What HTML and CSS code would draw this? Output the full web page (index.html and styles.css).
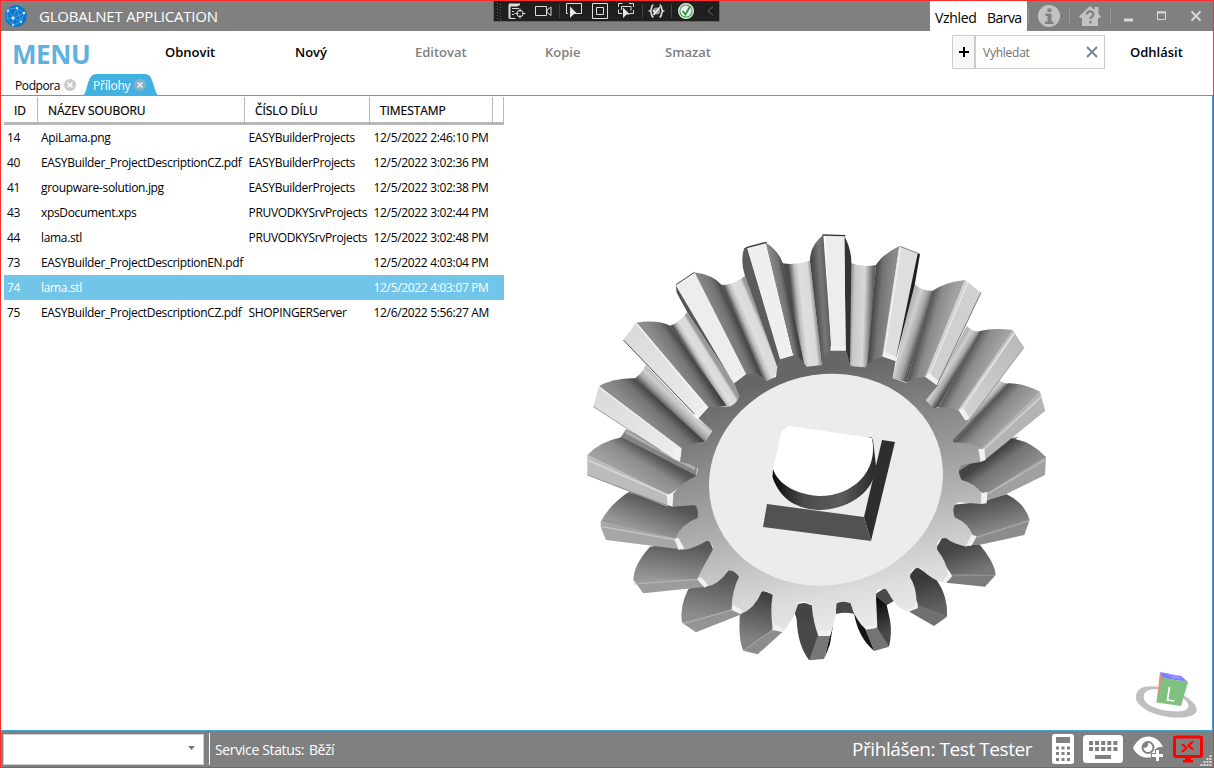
FILE: index.html
```html
<!DOCTYPE html>
<html lang="cs">
<head>
<meta charset="utf-8">
<title>GLOBALNET APPLICATION</title>
<link rel="stylesheet" href="styles.css">
</head>
<body>
<div class="window">
  <header class="titlebar">
    <svg class="globe" width="24" height="24" viewBox="0 0 24 24"><circle cx="12" cy="12" r="10.8" fill="#0878ce"/><path d="M4 5l9-1 7 5-3 9-8 3-6-7zM4 5l5 9 11-5M9 14l8 4M13 4l-4 10-6 0M13 4l4 14M9 14l0 7" fill="none" stroke="#75b9ed" stroke-width=".6"/><g fill="#e6f5ff"><circle cx="13" cy="4" r="1.1"/><circle cx="9" cy="14" r="1.5"/><circle cx="20" cy="9" r="1.2"/><circle cx="17" cy="18" r="1"/><circle cx="4" cy="7" r="1"/><circle cx="9" cy="21" r=".9"/></g></svg>
    <span class="app-name">GLOBALNET APPLICATION</span>
    <div class="title-tools">
      <div class="theme"><span class="t-look">Vzhled</span><span class="t-color">Barva</span></div>
      <svg width="184" height="30" viewBox="1027 1 184 30"><path d="M1028.500 9v14M1069.500 9v14M1110.500 9v14" stroke="#999"/><circle cx="1049" cy="16" r="11" fill="#c2c2c2"/><path d="M1047.500 8.500h4v3.500h-4zM1045.500 13.500h6v8h2v2.500h-8.500v-2.500h2.500v-5.500h-2z" fill="#808080"/><path d="M1079 16.500l11-10.500 4.500 4V7h4v7l2.500 2.500-1.500 1.500h-1.500v8h-16v-8h-1.500z" fill="#c2c2c2"/><path d="M1087 14.500c0-4 6.500-4 6.500-.5 0 2.500-3 2.500-3 5M1090.500 21v2.500" fill="none" stroke="#808080" stroke-width="2.200"/><path d="M1124 18.500h9v3h-9z" fill="#d8d8d8"/><path d="M1157.500 12.500h8v7h-8zM1157 12h9" fill="none" stroke="#d8d8d8"/><path d="M1157 11.500h9v2h-9z" fill="#d8d8d8"/><path d="M1191.500 11.500l9 9M1200.500 11.500l-9 9" stroke="#d8d8d8" stroke-width="2"/></svg>
    </div>
    <svg class="debugbar" width="227" height="22" viewBox="493 0 227 22"><path d="M493 0h227v22h-227z" fill="#666"/><path d="M494 1h225v20h-225z" fill="#1f1f1f"/><path d="M497.500 3v16M500.500 4v16" stroke="#666" stroke-dasharray="1 2"/><path d="M518 5.500h-8.500v13M509 4.500h11" fill="none" stroke="#ddd" stroke-width="2"/><path d="M509.500 18.500h6M512 8.500h7M512 11.500h2M512 14.500h2" stroke="#ddd"/><circle cx="520" cy="13.500" r="3.200" fill="none" stroke="#ddd"/><path d="M520 8.500v3.500M520 15v3.500M514.500 13.500h4M522 13.500h3.500" stroke="#ddd"/><path d="M535.500 6.500h11v9h-11zM547 10l4-3v8.500l-4-3z" fill="none" stroke="#ddd"/><path d="M559.500 4v14M642.500 4v14M671.500 4v14" stroke="#444"/><path d="M568 13.500h-1.500v-10h15v10h-6" fill="none" stroke="#ddd"/><path d="M570 6.500l7.500 7.500h-3.500l-4 4z" fill="#e5e5e5"/><path d="M592.500 3.500h15v15h-15zM596.500 7.500h7v7h-7z" fill="none" stroke="#ddd"/><path d="M618.500 7v-3.500h4M629 3.500h4.500v3.500M633.500 10v3.500h-4M622 13.500h-3.500v-4M621.500 10v-3.500h9.500v4" fill="none" stroke="#ddd"/><path d="M623 7.500l7 7h-3.500l-3.500 3.500z" fill="#e5e5e5"/><path d="M653.500 5c-3 0-1 5-3.500 6 2.500 1 .5 6 3.500 6M659.500 5c3 0 1 5 3.500 6-2.500 1-.5 6-3.500 6" fill="none" stroke="#ddd" stroke-width="1.700"/><circle cx="656.500" cy="11" r="3.600" fill="#999"/><path d="M653.500 15l6.500-8M653 10l3 3.500" stroke="#eee" stroke-width="1.600"/><circle cx="686" cy="11" r="7.300" fill="#2d9b40" stroke="#e8e8e8" stroke-width="1.400"/><circle cx="686" cy="11" r="5.600" fill="#eee"/><path d="M682.500 11l3 3.500 4.500-8" fill="none" stroke="#25943a" stroke-width="1.800"/><path d="M713 6.500l-5 4.500 5 4.500" fill="none" stroke="#666"/></svg>
  </header>

  <nav class="menu">
    <div class="menu-title">MENU</div>
    <div class="commands">
      <b class="c1">Obnovit</b><b class="c2">Nový</b><b class="c3 off">Editovat</b><b class="c4 off">Kopie</b><b class="c5 off">Smazat</b>
    </div>
    <div class="search">
      <span class="plus"><svg width="10" height="10"><path d="M0 5h10M5 0v10" stroke="#000" stroke-width="2"/></svg></span>
      <span class="query">Vyhledat</span>
      <svg class="clear" width="12" height="12"><path d="M1 1l10 10M11 1L1 11" stroke="#7d8790" stroke-width="2"/></svg>
    </div>
    <b class="logout">Odhlásit</b>
  </nav>

  <div class="tabs">
    <div class="tab"><span class="tab-a">Podpora</span><svg class="x" width="12" height="12"><circle cx="6" cy="6" r="6" fill="#c9c9c9"/><path d="M3.500 3.500l5 5M8.500 3.500l-5 5" stroke="#fff" stroke-width="1.500"/></svg></div>
    <div class="tab active">
      <svg class="tab-shape" width="77" height="22" viewBox="82 74 77 22"><path d="M82 96c4-2 4-7 6-13 2-6 4-9 9-9h47c6 0 7 3 9 9 2 6 3 11 6 13z" fill="#41b1e1"/></svg>
      <span class="tab-b">Přílohy</span><svg class="x" width="12" height="12"><circle cx="6" cy="6" r="6" fill="#8bb0c2"/><path d="M3.500 3.500l5 5M8.500 3.500l-5 5" stroke="#e4f4fb" stroke-width="1.500"/></svg>
    </div>
  </div>

  <main class="pane">
    <div class="grid">
      <div class="row head"><span>ID</span><span>NÁZEV SOUBORU</span><span>ČÍSLO DÍLU</span><span>TIMESTAMP</span><span></span></div>
      <div class="row"><span>14</span><span>ApiLama.png</span><span>EASYBuilderProjects</span><span>12/5/2022 2:46:10 PM</span></div>
      <div class="row"><span>40</span><span>EASYBuilder_ProjectDescriptionCZ.pdf</span><span>EASYBuilderProjects</span><span>12/5/2022 3:02:36 PM</span></div>
      <div class="row"><span>41</span><span>groupware-solution.jpg</span><span>EASYBuilderProjects</span><span>12/5/2022 3:02:38 PM</span></div>
      <div class="row"><span>43</span><span>xpsDocument.xps</span><span>PRUVODKYSrvProjects</span><span>12/5/2022 3:02:44 PM</span></div>
      <div class="row"><span>44</span><span>lama.stl</span><span>PRUVODKYSrvProjects</span><span>12/5/2022 3:02:48 PM</span></div>
      <div class="row"><span>73</span><span>EASYBuilder_ProjectDescriptionEN.pdf</span><span></span><span>12/5/2022 4:03:04 PM</span></div>
      <div class="row selected"><span>74</span><span>lama.stl</span><span></span><span>12/5/2022 4:03:07 PM</span></div>
      <div class="row"><span>75</span><span>EASYBuilder_ProjectDescriptionCZ.pdf</span><span>SHOPINGERServer</span><span>12/6/2022 5:56:27 AM</span></div>
    </div>

    <svg class="viewer" width="708" height="634" viewBox="504 96 708 634">
      <defs>
        <linearGradient id="f"><stop offset="0" stop-color="#8c8c8c"/><stop offset=".6" stop-color="#747474"/><stop offset="1" stop-color="#444"/></linearGradient>
        <linearGradient id="g"><stop offset="0" stop-color="#a2a2a2"/><stop offset=".6" stop-color="#8a8a8a"/><stop offset="1" stop-color="#545454"/></linearGradient>
        <linearGradient id="v"><stop offset="0" stop-color="#4c4c4c"/><stop offset=".25" stop-color="#bdbdbd"/><stop offset=".45" stop-color="#dedede"/><stop offset=".85" stop-color="#dadada"/><stop offset="1" stop-color="#999"/></linearGradient>
        <linearGradient id="w"><stop offset="0" stop-color="#555"/><stop offset=".35" stop-color="#a6a6a6"/><stop offset=".75" stop-color="#d0d0d0"/><stop offset="1" stop-color="#b8b8b8"/></linearGradient>
        <linearGradient id="f1" href="#f" gradientUnits="userSpaceOnUse" x1="180" y1="560" x2="231" y2="506"/>
        <linearGradient id="f2" href="#f" gradientUnits="userSpaceOnUse" x1="276" y1="405" x2="327" y2="371"/>
        <linearGradient id="f3" href="#f" gradientUnits="userSpaceOnUse" x1="410" y1="284" x2="467" y2="259"/>
        <linearGradient id="f4" href="#f" gradientUnits="userSpaceOnUse" x1="590" y1="207" x2="628" y2="200"/>
        <linearGradient id="f5" gradientUnits="userSpaceOnUse" x1="10" y1="200" x2="54" y2="197"><stop offset="0" stop-color="#444"/><stop offset=".6" stop-color="#777"/><stop offset="1" stop-color="#606060"/></linearGradient>
        <linearGradient id="f6" href="#f" gradientUnits="userSpaceOnUse" x1="245" y1="214" x2="189" y2="209"/>
        <linearGradient id="f7" href="#g" gradientUnits="userSpaceOnUse" x1="407" y1="295" x2="342" y2="277"/>
        <linearGradient id="f8" href="#g" gradientUnits="userSpaceOnUse" x1="528" y1="418" x2="466" y2="384"/>
        <linearGradient id="f9" href="#g" gradientUnits="userSpaceOnUse" x1="605" y1="572" x2="545" y2="516"/>
        <linearGradient id="f10" href="#f" gradientUnits="userSpaceOnUse" x1="618" y1="105" x2="567" y2="34"/>
        <linearGradient id="f11" gradientUnits="userSpaceOnUse" x1="580" y1="262" x2="555" y2="175"><stop offset="0" stop-color="#868686"/><stop offset="1" stop-color="#505050"/></linearGradient>
        <linearGradient id="f12" gradientUnits="userSpaceOnUse" x1="480" y1="405" x2="450" y2="320"><stop offset="0" stop-color="#777"/><stop offset="1" stop-color="#454545"/></linearGradient>
        <linearGradient id="f13" gradientUnits="userSpaceOnUse" x1="380" y1="510" x2="350" y2="410"><stop offset="0" stop-color="#626262"/><stop offset="1" stop-color="#383838"/></linearGradient>
        <linearGradient id="f14" gradientUnits="userSpaceOnUse" x1="240" y1="570" x2="200" y2="480"><stop offset="0" stop-color="#484848"/><stop offset="1" stop-color="#080808"/></linearGradient>
        <linearGradient id="f16" gradientUnits="userSpaceOnUse" x1="530" y1="600" x2="560" y2="470"><stop offset="0" stop-color="#828282"/><stop offset="1" stop-color="#404040"/></linearGradient>
        <linearGradient id="f17" gradientUnits="userSpaceOnUse" x1="380" y1="530" x2="400" y2="410"><stop offset="0" stop-color="#8c8c8c"/><stop offset="1" stop-color="#565656"/></linearGradient>
        <linearGradient id="f18" gradientUnits="userSpaceOnUse" x1="260" y1="420" x2="275" y2="310"><stop offset="0" stop-color="#969696"/><stop offset="1" stop-color="#585858"/></linearGradient>
        <linearGradient id="f19" gradientUnits="userSpaceOnUse" x1="180" y1="270" x2="215" y2="175"><stop offset="0" stop-color="#989898"/><stop offset="1" stop-color="#555"/></linearGradient>
        <linearGradient id="f20" href="#g" gradientUnits="userSpaceOnUse" x1="140" y1="105" x2="190" y2="25"/>
        <linearGradient id="v1" href="#w" gradientUnits="userSpaceOnUse" x1="260" y1="535" x2="293" y2="501"/>
        <linearGradient id="v2" href="#v" gradientUnits="userSpaceOnUse" x1="350" y1="406" x2="395" y2="378"/>
        <linearGradient id="v3" href="#v" gradientUnits="userSpaceOnUse" x1="486" y1="302" x2="545" y2="277"/>
        <linearGradient id="v4" href="#v" gradientUnits="userSpaceOnUse" x1="640" y1="250" x2="706" y2="243"/>
        <linearGradient id="v5" gradientUnits="userSpaceOnUse" x1="122" y1="250" x2="187" y2="252"><stop offset="0" stop-color="#999"/><stop offset=".15" stop-color="#c8c8c8"/><stop offset=".6" stop-color="#d8d8d8"/><stop offset="1" stop-color="#606060"/></linearGradient>
        <linearGradient id="v6" href="#w" gradientUnits="userSpaceOnUse" x1="330" y1="318" x2="280" y2="302"/>
        <linearGradient id="v7" href="#w" gradientUnits="userSpaceOnUse" x1="447" y1="416" x2="415" y2="396"/>
        <linearGradient id="v8" href="#w" gradientUnits="userSpaceOnUse" x1="513" y1="549" x2="492" y2="529"/>
        <linearGradient id="l1" x1="0" y1="0" x2="1" y2="1"><stop offset="0" stop-color="#d8d8d8"/><stop offset="1" stop-color="#eee"/></linearGradient>
        <linearGradient id="l2" x1="1" y1="0" x2="0" y2="1"><stop offset="0" stop-color="#b8b8b8"/><stop offset="1" stop-color="#d4d4d4"/></linearGradient>
        <linearGradient id="collar" gradientUnits="userSpaceOnUse" x1="630" y1="440" x2="800" y2="1200"><stop offset="0" stop-color="#666"/><stop offset=".25" stop-color="#868686"/><stop offset=".55" stop-color="#b0b0b0"/><stop offset=".85" stop-color="#dcdcdc"/><stop offset="1" stop-color="#eaeaea"/></linearGradient>
        <linearGradient id="bore" gradientUnits="userSpaceOnUse" x1="772" y1="0" x2="877" y2="0"><stop offset="0" stop-color="#080808"/><stop offset=".3" stop-color="#4b4b4b"/><stop offset=".65" stop-color="#5c5c5c"/><stop offset="1" stop-color="#282828"/></linearGradient>
      </defs>

      <g transform="translate(580 230) scale(.33333)">
        <!-- lower left teeth -->
        <g transform="translate(0 630)">
          <path d="M650 535Q652 615 687 660L714 657 730 560 700 495 650 495Z" fill="#484848"/>
          <path d="M644 520L645 497Q675 480 697 500L690 540 655 550Z" fill="#444"/>
          <path d="M480 520Q474 600 490 632L585 570 582 465 545 450Z" fill="url(#f16)"/><path d="M490 632L533 643 608 575 580 567Z" fill="#8c8c8c"/><path d="M490 632L580 568" stroke="#aaa" stroke-width="3"/>
          <path d="M325 447Q298 500 306 548L462 510 482 410 450 385Z" fill="url(#f17)"/><path d="M306 548L348 577 485 523 458 507Z" fill="#949494"/><path d="M308 552L458 509" stroke="#b4b4b4" stroke-width="3"/>
          <path d="M210 320Q160 375 160 420L359 419 404 340 387 296Z" fill="url(#f18)"/><path d="M160 420L190 460 380 440 355 416Z" fill="#9c9c9c"/><path d="M163 432L358 418" stroke="#b8b8b8" stroke-width="3"/>
          <path d="M145 155L140 165 260 210 350 240 355 195 230 170Z" fill="#777"/>
          <path d="M140 160Q85 200 62 245L290 299 357 235 352 193Z" fill="url(#f19)"/><path d="M62 245L62 260 78 300 300 328 288 295Z" fill="#a6a6a6"/><path d="M64 260L290 300" stroke="#c4c4c4" stroke-width="4"/>
          <path d="M120-5L138-32 300 50 352 76 348 112Z" fill="#858585"/><path d="M137-25L345 86" stroke="#adadad" stroke-width="10"/>
          <path d="M125-8Q60 5 22 45L265 165 352 108Z" fill="url(#f20)"/><path d="M22 45L22 105 263 200 262 163Z" fill="#bcbcbc"/><path d="M22 60L262 165" stroke="#d8d8d8" stroke-width="5"/><path d="M22 105L263 197" stroke="#777" stroke-width="2"/>
        </g>
        <!-- upper left teeth -->
        <path d="M165 445Q190 425 197 405L345 562 397 600 375 635 355 625Z" fill="url(#v1)"/>
        <path d="M57 468Q105 443 165 445L375 635 305 658Z" fill="url(#f1)"/><path d="M57 468L40 530 280 685 305 656Z" fill="url(#l1)"/><path d="M57 472L303 656" stroke="#eee" stroke-width="4"/><path d="M40 530L240 660" stroke="#777" stroke-width="2"/>
        <path d="M270 287Q295 280 322 247L462 460 478 500Q470 530 440 530Z" fill="url(#v2)"/>
        <path d="M168 278Q230 268 270 287L440 527 385 532Z" fill="url(#f2)"/><path d="M168 278L130 330 345 560 383 532Z" fill="url(#l1)"/><path d="M170 281L380 532" stroke="#f2f2f2" stroke-width="5"/><path d="M130 330L343 552" stroke="#555" stroke-width="3"/>
        <path d="M425 165Q460 165 495 138L592 412Q592 450 555 453L543 440Z" fill="url(#v3)"/>
        <path d="M287 165L290 188 322 247 462 460 456 445Z" fill="#555"/>
        <path d="M343 127Q400 135 425 165L548 442 498 432Z" fill="url(#f3)"/><path d="M343 127L287 165 458 455 496 432Z" fill="#ededed"/><path d="M288 164L343 127" stroke="#444" stroke-width="3"/>
        <path d="M608 100Q650 106 690 92L725 405 680 411 668 398Z" fill="url(#v4)"/>
        <path d="M502 55L490 62Q482 100 495 138L592 412 602 388Z" fill="#5c5c5c"/>
        <path d="M557 38Q595 62 608 100L673 405 640 378Z" fill="#666"/><path d="M557 38Q595 62 608 100L673 405 640 378Z" fill="url(#f4)"/><path d="M502 55L557 38 638 378 600 388Z" fill="#efefef"/><path d="M492 58L502 52 560 37" fill="none" stroke="#333" stroke-width="4"/>
        <!-- upper right teeth -->
        <g transform="translate(690 0)">
          <path d="M120 98Q160 114 198 105L175 405 165 412 120 408Z" fill="url(#v5)"/>
          <path d="M0 92Q0 45 40 15L65 360 35 402Z" fill="url(#f5)"/><path d="M103 17Q125 60 124 100L120 408 107 360Z" fill="#333"/><path d="M45 17L103 17 107 360 64 360Z" fill="#ededed"/><path d="M37 15L106 17" stroke="#333" stroke-width="4"/>
          <path d="M312 160Q335 185 370 182L290 457 248 445Z" fill="url(#v6)"/>
          <path d="M198 105Q215 75 268 48L220 380 172 407Z" fill="url(#f6)"/><path d="M268 48L325 71 257 390 217 380Z" fill="#dedede"/><path d="M272 50L222 378" stroke="#eee" stroke-width="5"/><path d="M270 49L329 72" stroke="#444" stroke-width="2"/><path d="M323 71L330 73 314 165 256 393Z" fill="#202020"/>
          <path d="M470 287Q490 308 512 303L387 530 370 536 345 510 383 460Z" fill="url(#v7)"/>
          <path d="M368 182Q405 157 465 150L347 440 290 457Z" fill="url(#f7)"/><path d="M465 150L513 188 382 465 347 437Z" fill="#d0d0d0"/><path d="M473 157L358 434" stroke="#e8e8e8" stroke-width="4"/><path d="M513 188L382 462" stroke="#666" stroke-width="2.500"/>
          <path d="M568 450Q580 462 600 460L430 638 420 625 478 565Z" fill="url(#v8)"/>
          <path d="M510 303Q550 292 608 300L448 540 385 535Z" fill="url(#f8)"/><path d="M608 300L642 352 478 570 447 538Z" fill="url(#l2)"/><path d="M612 310L455 540" stroke="#e4e4e4" stroke-width="5"/><path d="M642 352L478 570" stroke="#777" stroke-width="2"/>
        </g>
        <!-- lower right teeth -->
        <g transform="translate(690 630)">
          <path d="M625-10L598-5 527 55 450 72 440 115 475 125Z" fill="#888"/><path d="M600-3L527 45" stroke="#aaa" stroke-width="8"/>
          <path d="M600-5Q660 0 707 50L530 165 443 120 443 95Z" fill="url(#f10)"/><path d="M708 48L705 105 528 192 530 160Z" fill="#a0a0a0"/><path d="M708 58L532 162" stroke="#bbb" stroke-width="4"/>
          <path d="M590 163Q645 190 659 240L496 293 426 235 428 194 520 185Z" fill="url(#f11)"/><path d="M659 240L643 285 483 320 500 288Z" fill="#8c8c8c"/><path d="M657 242L500 292" stroke="#a8a8a8" stroke-width="4"/>
          <path d="M510 315Q555 370 557 405L425 405 375 330 400 287 470 315Z" fill="url(#f12)"/><path d="M557 405L525 440 408 428 428 402Z" fill="#7c7c7c"/><path d="M555 406L428 405" stroke="#999" stroke-width="3"/>
          <path d="M380 420Q415 470 411 530L325 498 295 410 320 380Z" fill="url(#f13)"/><path d="M411 530L372 558 298 515 325 495Z" fill="#707070"/>
          <path d="M195 465L225 445 252 482 230 495 240 540Q247 580 237 620L198 564 188 500Z" fill="url(#f14)"/><path d="M192 465L225 443 252 480 230 495Z" fill="#4b4b4b"/><path d="M132 520Q145 595 193 633L167 567Z" fill="#151515"/><path d="M237 620L193 633 165 567 200 560Z" fill="#747474"/>
          <path d="M78 488Q100 473 122 488L133 522Q105 515 78 522Z" fill="#484848"/><path d="M60 585L70 550 60 612 43 657Z" fill="#111"/><path d="M24 585L60 587 42 657-2 660Z" fill="#777"/>
        </g>
        <g transform="translate(690 0)"><path d="M597 460Q640 460 690 485L520 663 430 638Z" fill="url(#f9)"/><path d="M690 485L706 542 527 688 510 660Z" fill="#b4b4b4"/><path d="M694 500L520 660" stroke="#d0d0d0" stroke-width="5"/></g>

        <path fill="url(#collar)" d="M278 830L278 792Q315 750 345 740Q358 722 350 708L300 695 303 657Q330 637 375 635L397 602 355 565 385 532Q410 525 440 530Q465 530 478 500L462 460 498 432Q530 428 545 440L560 453 588 440 592 412 600 388 640 375Q660 380 672 400L680 410 725 405Q730 375 752 360L797 360 812 408 855 412Q870 390 908 380L947 393 938 445 978 458Q1005 440 1040 440L1075 465 1037 510 1060 535Q1100 527 1137 540L1165 572 1117 628 1120 638Q1165 635 1200 655L1205 695 1145 705Q1128 720 1145 750Q1185 760 1205 790L1203 822 1135 817Q1113 825 1124 862Q1165 880 1178 915L1160 950Q1115 940 1098 924Q1065 925 1072 960Q1100 995 1105 1035L1090 1058Q1055 1050 1022 1015Q990 1010 990 1042Q1010 1070 1010 1125L985 1145Q950 1140 920 1078Q885 1070 888 1097L892 1190 857 1198Q825 1170 812 1120Q790 1110 770 1120Q765 1180 750 1217L715 1217Q700 1180 695 1125Q675 1110 655 1120Q640 1175 608 1205L578 1197Q570 1140 578 1095Q560 1080 545 1085Q525 1135 482 1152L455 1135Q455 1085 477 1040Q465 1020 445 1022Q415 1065 378 1070L352 1045Q375 1000 398 960Q400 935 380 932Q345 955 305 960L285 927Q305 880 352 865Q358 840 345 825Z"/>
        <path fill="#f1f1f1" d="M285 650l20 7-5 38-22-10zM365 530l20 2-30 33-12-15zM475 433l23 0-36 27-5-15zM602 377l32-13 7 12-42 12zM752 348h44l2 14h-47zM907 378l8-12 34 15-2 12zM1035 440l12-12 28 24-5 14zM1135 540l15-7 18 30-11 9zM1195 657l18 0 4 33-15 5zM1205 790l17-5-2 35-17 2zM1175 914l15 5-17 29-15-1zM1105 1033l13 4-21 23-10-3zM1010 1125l5 9-29 11-5-5zM857 1190l34-6-1 10-32 5zM715 1202h40l-5 16h-33zM580 1182l31 14-4 10-30-6zM460 1125l30 18-8 10-28-14zM363 1040l21 25-10 8-23-25zM295 923l18 32-17 5-13-33zM260 792h20l-2 38-16-5z"/>
      </g>
      <ellipse cx="826" cy="479.700" rx="117.700" ry="105.300" transform="rotate(-14 826 479.700)" fill="#ececec"/>
      <path d="M773 469L772.500 477C780 500 798 510 822 510C852 508 875 490 876 466L873 440 871 437Z" fill="url(#bore)"/>
      <path d="M789 426L872 438C879 472 852 496 820 496C798 495 778 485 773 469L778 448 781 432Z" fill="#fff"/>
      <path d="M882 440L895 442 871 541 864 517Z" fill="#2e2e2e"/>
      <path d="M767 504L864 517 871 541 763 527Z" fill="#525252"/>

      <!-- orientation cube -->
      <path fill="#bfbfbf" fill-rule="evenodd" d="M1136 696C1138 683 1154 685 1172 690C1192 697 1203 710 1193 715C1179 721 1151 716 1141 706Q1135 701 1136 696ZM1144 695C1141 707 1167 713 1183 711C1196 707 1184 696 1170 692C1159 688 1145 688 1144 695Z"/>
      <path d="M1160 672L1156.500 702.500 1158 702.500 1162 678Z" fill="#ff8080"/><path d="M1160 672L1181 676 1188 682 1162 678Z" fill="#8080ff"/><path d="M1161.500 677.500L1188 682 1181 706 1156.500 702.500Z" fill="#80c080"/><path d="M1168 674l10 2M1171 677l10 1" stroke="#aaaaff"/><path d="M1169.500 687l-2 13 7 1" fill="none" stroke="#fff" stroke-width="1.700"/>
    </svg>
  </main>

  <footer class="status">
    <div class="combo"><svg width="8" height="6"><path d="M0 0h7L3.500 4z" fill="#777"/></svg></div>
    <div class="sep"></div>
    <span class="service">Service Status:</span><span class="running">Běží</span>
    <span class="user">Přihlášen: Test Tester</span>
    <svg class="status-icons" width="160" height="36" viewBox="1052 731 160 36">
      <rect x="1052" y="734" width="22" height="30" rx="2.500" fill="#fff"/><path d="M1056 737h14v6h-14z" fill="#808080"/><path d="M1056 748h14M1056 753.500h14M1056 759.500h14" stroke="#808080" stroke-width="3" stroke-dasharray="3 2.500"/>
      <rect x="1083" y="735" width="40" height="28" rx="3.500" fill="#fff"/><path d="M1089 743h29M1089 749h29" stroke="#808080" stroke-width="4" stroke-dasharray="4 2.100"/><path d="M1095 755h16v4h-16z" fill="#808080"/>
      <path d="M1133 748c7-15 23-15 30-1-3 0-6 0-7 2v4h-4v4c-8 2-15-1-19-9z" fill="#fff"/><circle cx="1148" cy="747.500" r="6.500" fill="#808080"/><path d="M1148 743a4.500 4.500 0 1 1-4.500 4.500c2 1 5 0 4.500-4.500z" fill="#fff"/><path d="M1157.500 749v13M1151 755.500h13" stroke="#808080" stroke-width="5"/><path d="M1157.500 750v11M1152 755.500h11" stroke="#fff" stroke-width="3"/>
      <rect x="1174.500" y="737" width="27" height="19.500" rx="1.500" fill="none" stroke="#f00" stroke-width="3"/><path d="M1182 744l4.500 4-4.500 4M1193 741.500l-4.500 4 4.500 4" fill="none" stroke="#f00" stroke-width="2.200"/><path d="M1185 757h6v3h2v2.500h-10v-2.500h2z" fill="#f00"/>
      <path d="M1210.500 755v11M1207.500 758v8M1204.500 761v5M1201.500 764v2" stroke="#ddd" stroke-width="2" stroke-dasharray="2 1"/>
    </svg>
  </footer>
</div>
</body>
</html>
```
FILE: styles.css
```css
* { box-sizing: border-box; }
body { margin: 0; font-family: "Open Sans", "Noto Sans", sans-serif; font-size: 12px; color: #000; }
.window { width: 1214px; height: 768px; border: 1px solid #ff2d2d; display: flex; flex-direction: column; background: #fff; overflow: hidden; position: relative; }
svg { display: block; flex: none; }
span, b, .menu-title { white-space: nowrap; }

.titlebar { height: 30px; flex: none; background: #808080; display: flex; align-items: center; padding-left: 3px; }
.app-name { color: #fff; font-size: 15px; letter-spacing: -.2px; margin-left: 11px; }
.title-tools { margin-left: auto; display: flex; height: 30px; }
.theme { width: 97px; background: #fff; display: flex; padding: 7px 0 0 5px; font-size: 14px; line-height: 20px; }
.t-look { width: 52px; letter-spacing: -.35px; }
.t-color { letter-spacing: -.55px; }
.title-tools > svg { margin-right: 2px; }
.debugbar { position: absolute; left: 492px; top: -1px; }

.menu { height: 43px; flex: none; display: flex; font-size: 13px; }
.menu-title { width: 151px; padding-left: 11px; font-size: 26px; line-height: 46px; font-weight: 700; color: #5fb1e0; letter-spacing: -.4px; }
.commands { display: flex; line-height: 42px; padding-left: 13px; }
b { font-weight: 600; }
.c1 { width: 130px; } .c2 { width: 120px; } .c3 { width: 130px; } .c4 { width: 120px; }
.off { color: #808080; }
.search { width: 153px; height: 34px; margin: 4px 0 0 auto; border: 1px solid #ccc; display: flex; align-items: center; }
.plus { width: 23px; height: 32px; background: #f7f7f7; border-right: 2px solid #ccc; display: grid; place-items: center; }
.query { font-size: 12px; color: #707070; margin-left: 7px; letter-spacing: -.25px; }
.clear { margin: 0 6px 0 auto; }
.logout { width: 83px; margin-left: 25px; line-height: 42px; }

.tabs { height: 21px; flex: none; display: flex; }
.tab { width: 80px; display: flex; padding-left: 14px; line-height: 24px; letter-spacing: -.4px; }
.tab-a { width: 49px; }
.tab .x { margin-top: 5px; }
.tab.active { color: #fff; position: relative; padding-left: 12px; letter-spacing: -.2px; }
.tab-shape { position: absolute; left: 1px; top: 0; }
.tab-b, .active .x { position: relative; }
.tab-b { width: 41px; }

.pane { height: 635px; flex: none; border: solid #41a5cf; border-width: 1px 1px 0 0; display: flex; }
.grid { width: 503px; padding: 1px 0 0 3px; flex: none; }
.row { display: grid; grid-template-columns: 34px 207.500px 125px 123px 11px; height: 25px; line-height: 25px; letter-spacing: -.33px; }
.row span { padding-left: 3px; }
.head { height: 28px; line-height: 27px; border-bottom: 3px solid #b8b8b8; grid-template-columns: 34px 207px 125px 123px 11px; letter-spacing: -.07px; -webkit-text-stroke: .2px #000; }
.head span { border-right: 1px solid #b8b8b8; padding-left: 10px; }
.selected { background: #71c5e8; color: #fff; }

.status { height: 37px; flex: none; border-top: 1px solid #41a5cf; background: #808080; color: #fff; display: flex; align-items: center; padding-left: 2px; }
.combo { width: 201px; height: 31px; border: 1px solid #ccc; background: #fff; display: flex; align-items: center; justify-content: flex-end; padding-right: 7px; }
.sep { width: 1px; height: 32px; background: #fff; margin-left: 5px; }
.service { font-size: 14px; letter-spacing: -.35px; margin-left: 5px; width: 94px; }
.running { font-size: 14px; letter-spacing: -.5px; }
.user { margin-left: auto; font-size: 19px; letter-spacing: -.43px; width: 200px; }
.status-icons { margin-right: 1px; }
```
